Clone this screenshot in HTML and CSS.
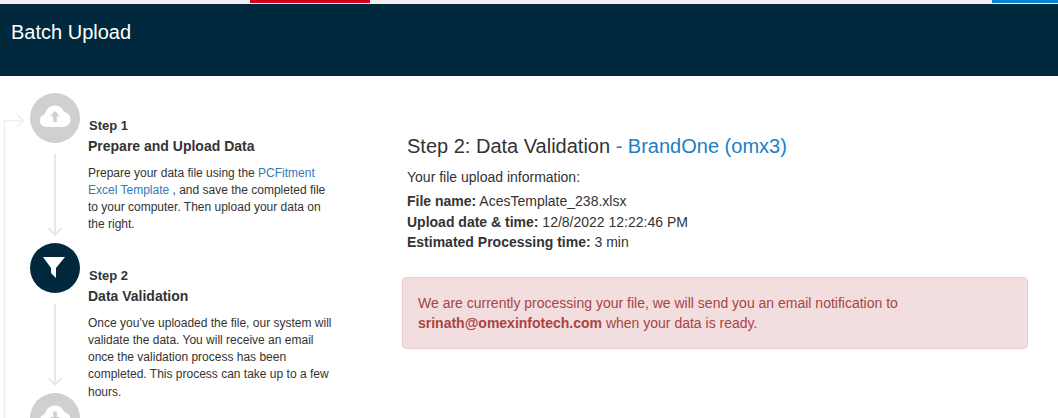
FILE: index.html
```html
<!DOCTYPE html>
<html lang="en">
<head>
    <meta charset="UTF-8">
    <meta name="viewport" content="width=device-width, initial-scale=1.0">
    <title>Batch Upload</title>
    <link rel="stylesheet" href="styles.css">
</head>
<body>
    <div class="top-strip">
        <span class="strip-red"></span>
        <span class="strip-blue"></span>
    </div>

    <header class="page-header">
        <h1>Batch Upload</h1>
    </header>

    <div class="content">
        <aside class="steps">
            <!-- loop arrow going back to step 1 -->
            <svg class="loop-arrow" width="26" height="330" viewBox="0 0 26 330">
                <path d="M4.5 330V27.5H23M17 21.5l6.5 6-6.5 6" fill="none" stroke="#eeeeee" stroke-width="1.5"/>
            </svg>

            <div class="step">
                <div class="step-rail">
                    <div class="step-icon">
                        <svg width="32" height="26" viewBox="0 1 32 26">
                            <path d="M8 23C3.500 23 .8 20 .8 16.500.8 13.300 3 10.800 6 10.200 6.800 5 10.800 1.500 15.800 1.500c4.400 0 8 2.600 9.300 6.600 3.700.5 6.400 3.800 6.400 7.500 0 4.300-3.200 7.400-7.500 7.400z" fill="#fff"/>
                            <path d="M16 7l5 5.500h-3.200V18h-3.600v-5.500H11z" fill="#d0d0d0"/>
                        </svg>
                    </div>
                    <div class="connector"></div>
                </div>
                <div class="step-text">
                    <h4>Step 1</h4>
                    <h5>Prepare and Upload Data</h5>
                    <p>Prepare your data file using the <a href="#">PCFitment Excel Template</a> , and save the completed file to your computer. Then upload your data on the right.</p>
                </div>
            </div>

            <div class="step">
                <div class="step-rail">
                    <div class="step-icon active">
                        <svg width="24" height="24" viewBox="0 0 24 24">
                            <path d="M0 1h22L13 12v10l-5-5v-5z" fill="#fff"/>
                        </svg>
                    </div>
                    <div class="connector"></div>
                </div>
                <div class="step-text">
                    <h4>Step 2</h4>
                    <h5>Data Validation</h5>
                    <p>Once you’ve uploaded the file, our system will validate the data. You will receive an email once the validation process has been completed. This process can take up to a few hours.</p>
                </div>
            </div>

            <div class="step">
                <div class="step-rail">
                    <div class="step-icon">
                        <svg width="32" height="26" viewBox="0 1 32 26">
                            <path d="M8 23C3.500 23 .8 20 .8 16.500.8 13.300 3 10.800 6 10.200 6.800 5 10.800 1.500 15.800 1.500c4.400 0 8 2.600 9.300 6.600 3.700.5 6.400 3.800 6.400 7.500 0 4.300-3.200 7.400-7.500 7.400z" fill="#fff"/>
                            <path d="M16 18.500l5-5.500h-3.200V7.500h-3.600V13H11z" fill="#d0d0d0"/>
                        </svg>
                    </div>
                </div>
            </div>
        </aside>

        <main class="upload-info">
            <h2>Step 2: Data Validation <span class="brand">- BrandOne (omx3)</span></h2>
            <p class="intro">Your file upload information:</p>
            <p><strong>File name:</strong> AcesTemplate_238.xlsx</p>
            <p><strong>Upload date &amp; time:</strong> 12/8/2022 12:22:46 PM</p>
            <p><strong>Estimated Processing time:</strong> 3 min</p>

            <div class="alert">
                We are currently processing your file, we will send you an email notification to
                <strong>srinath@omexinfotech.com</strong> when your data is ready.
            </div>
        </main>
    </div>
</body>
</html>
```

FILE: styles.css
```css
html, body {
    height: 100%;
    overflow: hidden;
}

body {
    margin: 0;
    background-color: white;
    font-family: "Liberation Sans", Arial, sans-serif;
    font-size: 14px;
    line-height: 20px;
    color: #333;
}

.top-strip {
    display: flex;
    justify-content: space-between;
    height: 4px;
    padding-left: 250px;
    background-color: #f0f0f0;
}

.strip-red {
    width: 120px;
    height: 3px;
    background-color: #d0021b;
}

.strip-blue {
    width: 66px;
    height: 3px;
    background-color: #0a84d0;
}

.page-header {
    height: 72px;
    box-sizing: border-box;
    padding: 16px 11px;
    background-color: #00293e;
}

.page-header h1 {
    margin: 0;
    font-size: 20px;
    font-weight: normal;
    line-height: 24px;
    color: white;
}

.content {
    display: flex;
}

.steps {
    position: relative;
    width: 402px;
    flex-shrink: 0;
    box-sizing: border-box;
    padding: 17px 0 0 30px;
}

.loop-arrow {
    position: absolute;
    left: 0;
    top: 17px;
}

.step {
    display: flex;
    height: 150px;
}

.step-rail {
    display: flex;
    flex-direction: column;
    align-items: center;
    width: 50px;
    flex-shrink: 0;
}

.step-icon {
    display: flex;
    align-items: center;
    justify-content: center;
    width: 50px;
    height: 50px;
    flex-shrink: 0;
    border-radius: 50%;
    background-color: #d0d0d0;
}

.step-icon.active {
    background-color: #00293e;
}

.connector {
    position: relative;
    width: 2px;
    height: 81px;
    margin-top: 11px;
    background-color: #e8e8e8;
}

.connector::after {
    content: "";
    position: absolute;
    left: -4px;
    bottom: 1px;
    width: 10px;
    height: 10px;
    border-right: 2px solid #e8e8e8;
    border-bottom: 2px solid #e8e8e8;
    box-sizing: border-box;
    transform: rotate(45deg);
}

.step-text {
    width: 246px;
    margin-left: 8px;
    padding-top: 23px;
    font-size: 12px;
    line-height: 17.15px;
}

.step-text h4 {
    margin: 0 0 0 1px;
    font-size: 13px;
    line-height: 20px;
    font-weight: bold;
}

.step-text h5 {
    margin: 0;
    font-size: 14px;
    line-height: 20px;
    font-weight: bold;
}

.step-text p {
    margin: 9px 0 0;
}

.step-text a {
    color: #337ab7;
    text-decoration: none;
}

.upload-info {
    width: 626px;
    padding-top: 57px;
}

.upload-info h2 {
    margin: 0 0 8px 5px;
    font-size: 20px;
    font-weight: normal;
    line-height: 26px;
}

.brand {
    color: #1b7fc4;
}

.upload-info p {
    margin: 0 0 0 5px;
    line-height: 20.3px;
}

.upload-info p.intro {
    margin-bottom: 4px;
}

.alert {
    margin-top: 25px;
    padding: 15px;
    border: 1px solid #ebccd1;
    border-radius: 4px;
    background-color: #f2dede;
    color: #a94442;
}
```
